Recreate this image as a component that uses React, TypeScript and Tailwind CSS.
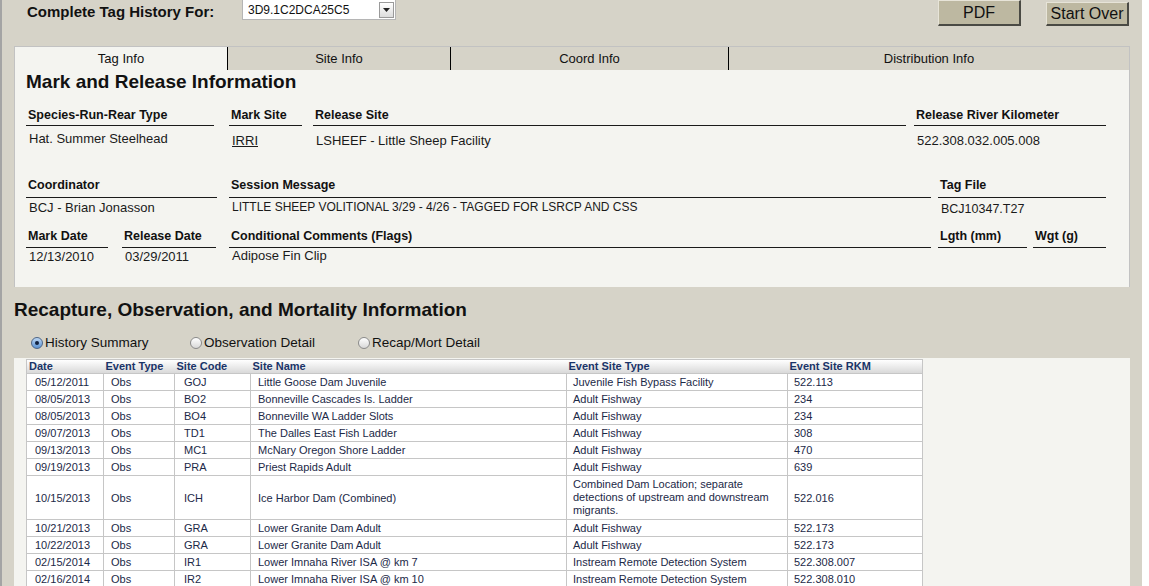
import React from 'react';

const font = "font-['Liberation_Sans',Arial,sans-serif]";

type FieldProps = {
  w: string;
  label: string;
  children?: React.ReactNode;
  labelClass?: string;
  valueClass?: string;
};

const Field: React.FC<FieldProps> = ({ w, label, children, labelClass = '', valueClass = '' }) => (
  <div className={`${w} shrink-0`}>
    <div className={`border-b border-[#1a1a1a] pl-[2px] text-[12.5px] font-bold leading-[16px] text-[#111] ${labelClass}`}>
      {label}
    </div>
    <div className={`pl-[3px] leading-[16px] text-[#1a1a1a] ${valueClass}`}>{children}</div>
  </div>
);

const Radio: React.FC<{ checked?: boolean; label: string; w: string }> = ({ checked, label, w }) => (
  <div className={`${w} flex items-center gap-[2px]`}>
    <span
      className={`flex h-[12px] w-[12px] items-center justify-center rounded-full border ${
        checked
          ? 'border-[#4d6587] bg-linear-to-b from-[#bcd6f2] to-[#5c93d3]'
          : 'border-[#8a8a8a] bg-linear-to-b from-white to-[#d8d8d8]'
      }`}
    >
      {checked && <span className="h-[4px] w-[4px] rounded-full bg-[#10213f]" />}
    </span>
    <span className="text-[13.5px] leading-[18px] text-[#111]">{label}</span>
  </div>
);

const rows: string[][] = [
  ['05/12/2011', 'Obs', 'GOJ', 'Little Goose Dam Juvenile', 'Juvenile Fish Bypass Facility', '522.113'],
  ['08/05/2013', 'Obs', 'BO2', 'Bonneville Cascades Is. Ladder', 'Adult Fishway', '234'],
  ['08/05/2013', 'Obs', 'BO4', 'Bonneville WA Ladder Slots', 'Adult Fishway', '234'],
  ['09/07/2013', 'Obs', 'TD1', 'The Dalles East Fish Ladder', 'Adult Fishway', '308'],
  ['09/13/2013', 'Obs', 'MC1', 'McNary Oregon Shore Ladder', 'Adult Fishway', '470'],
  ['09/19/2013', 'Obs', 'PRA', 'Priest Rapids Adult', 'Adult Fishway', '639'],
  [
    '10/15/2013',
    'Obs',
    'ICH',
    'Ice Harbor Dam (Combined)',
    'Combined Dam Location; separate detections of upstream and downstream migrants.',
    '522.016',
  ],
  ['10/21/2013', 'Obs', 'GRA', 'Lower Granite Dam Adult', 'Adult Fishway', '522.173'],
  ['10/22/2013', 'Obs', 'GRA', 'Lower Granite Dam Adult', 'Adult Fishway', '522.173'],
  ['02/15/2014', 'Obs', 'IR1', 'Lower Imnaha River ISA @ km 7', 'Instream Remote Detection System', '522.308.007'],
  ['02/16/2014', 'Obs', 'IR2', 'Lower Imnaha River ISA @ km 10', 'Instream Remote Detection System', '522.308.010'],
];

const headers = ['Date', 'Event Type', 'Site Code', 'Site Name', 'Event Site Type', 'Event Site RKM'];
const cellPad = ['pl-[8px]', 'pl-[7px]', 'pl-[9px]', 'pl-[7px]', 'pl-[6px]', 'pl-[6px]'];

export default function App() {
  return (
    <div className={`flex h-[586px] w-[1149px] overflow-hidden bg-white ${font}`}>
      <div className="h-full w-[1142px] shrink-0 border-l-2 border-[#a4a4a4] bg-[#d6d3c8]">
        {/* Header */}
        <div className="flex h-[46px] items-start">
          <div className="ml-[25px] mt-[2px] w-[215px] text-[15px] font-bold leading-[20px] text-[#111]">
            Complete Tag History For:
          </div>
          <div className="flex h-[20px] w-[154px] items-center border border-t-0 border-[#b5b5b5] bg-white">
            <span className="flex-1 pl-[5px] text-[12px] leading-[18px] text-[#111]">3D9.1C2DCA25C5</span>
            <span className="mr-[1px] flex h-[16px] w-[15px] items-center justify-center border border-[#9a9a9a] bg-linear-to-b from-white to-[#dcdcdc]">
              <svg width="7" height="4" viewBox="0 0 7 4">
                <path d="M0 0h7L3.5 4z" fill="#222" />
              </svg>
            </span>
          </div>
          <button className="ml-auto flex h-[26px] w-[83px] items-center justify-center border border-b-2 border-r-2 border-[#e7e4d8] border-b-[#4a4a44] border-r-[#4a4a44] bg-[#bdb8a1] text-[16px] text-[#111]">
            PDF
          </button>
          <button className="ml-[25px] mr-[13px] mt-[2px] flex h-[24px] w-[83px] items-center justify-center border border-b-2 border-r-2 border-[#e7e4d8] border-b-[#4a4a44] border-r-[#4a4a44] bg-[#bdb8a1] text-[16px] text-[#111]">
            Start Over
          </button>
        </div>

        {/* Tabs + Mark and Release */}
        <div className="ml-[12px] w-[1116px] border-x border-t border-[#c2c2c2]">
          <div className="flex h-[23px] text-[13px] leading-[23px] text-[#111]">
            <div className="w-[212px] bg-[#f4f4f0] text-center">Tag Info</div>
            <div className="w-[223px] border-l border-black text-center">Site Info</div>
            <div className="w-[278px] border-l border-black text-center">Coord Info</div>
            <div className="w-[401px] border-l border-black text-center">Distribution Info</div>
          </div>
          <div className="h-[217px] bg-[#f4f4f0] pl-[11px]">
            <div className="text-[19px] font-bold leading-[24px] text-[#111]">Mark and Release Information</div>

            <div className="mt-[13px] flex">
              <Field w="w-[188px]" label="Species-Run-Rear Type" labelClass="pb-[2px]" valueClass="mt-[5px] text-[13px]">
                Hat. Summer Steelhead
              </Field>
              <Field w="w-[73px] ml-[15px]" label="Mark Site" labelClass="pb-[2px]" valueClass="mt-[7px] text-[13px]">
                <span className="underline">IRRI</span>
              </Field>
              <Field w="w-[593px] ml-[11px]" label="Release Site" labelClass="pb-[2px]" valueClass="mt-[7px] text-[13px]">
                LSHEEF - Little Sheep Facility
              </Field>
              <Field w="w-[192px] ml-[8px]" label="Release River Kilometer" labelClass="pb-[2px]" valueClass="mt-[7px] text-[13px]">
                522.308.032.005.008
              </Field>
            </div>

            <div className="mt-[28px] flex">
              <Field w="w-[191px]" label="Coordinator" labelClass="pb-[4px]" valueClass="mt-[2px] text-[13px]">
                BCJ - Brian Jonasson
              </Field>
              <Field w="w-[702px] ml-[12px]" label="Session Message" labelClass="pb-[4px]" valueClass="mt-[1px] text-[12px]">
                LITTLE SHEEP VOLITIONAL 3/29 - 4/26 - TAGGED FOR LSRCP AND CSS
              </Field>
              <Field w="w-[168px] ml-[7px]" label="Tag File" labelClass="pb-[4px]" valueClass="mt-[3px] text-[12.5px]">
                BCJ10347.T27
              </Field>
            </div>

            <div className="mt-[11px] flex">
              <Field w="w-[82px]" label="Mark Date" labelClass="pb-[3px]" valueClass="mt-[1px] text-[13px]">
                12/13/2010
              </Field>
              <Field w="w-[94px] ml-[14px]" label="Release Date" labelClass="pb-[3px]" valueClass="mt-[1px] text-[13px]">
                03/29/2011
              </Field>
              <Field w="w-[702px] ml-[13px]" label="Conditional Comments (Flags)" labelClass="pb-[3px]" valueClass="text-[13px]">
                Adipose Fin Clip
              </Field>
              <Field w="w-[89px] ml-[7px]" label="Lgth (mm)" labelClass="pb-[3px]" />
              <Field w="w-[73px] ml-[6px]" label="Wgt (g)" labelClass="pb-[3px]" />
            </div>
          </div>
        </div>

        {/* Recapture section */}
        <div className="ml-[12px] mt-[11px] text-[19px] font-bold leading-[24px] text-[#111]">
          Recapture, Observation, and Mortality Information
        </div>
        <div className="ml-[29px] mt-[12px] flex">
          <Radio checked label="History Summary" w="w-[159px]" />
          <Radio label="Observation Detail" w="w-[168px]" />
          <Radio label="Recap/Mort Detail" w="w-[160px]" />
        </div>

        <div className="ml-[12px] mt-[6px] h-[240px] w-[1116px] bg-[#f4f4f0] pl-[12px] pt-[1px]">
          <table className="w-[896px] table-fixed border-collapse border border-[#c6c6c6] bg-white text-[11px]">
            <colgroup>
              <col className="w-[77px]" />
              <col className="w-[71px]" />
              <col className="w-[76px]" />
              <col className="w-[316px]" />
              <col className="w-[221px]" />
              <col className="w-[135px]" />
            </colgroup>
            <thead>
              <tr className="h-[14px] bg-linear-to-b from-white to-[#d6d6d6]">
                {headers.map((h) => (
                  <th key={h} className="border-b border-[#c6c6c6] pl-[2px] text-left font-bold leading-[13px] text-[#1a3468]">
                    {h}
                  </th>
                ))}
              </tr>
            </thead>
            <tbody>
              {rows.map((r, i) => (
                <tr key={i}>
                  {r.map((c, j) => (
                    <td
                      key={j}
                      className={`border border-[#c6c6c6] ${cellPad[j]} pr-[6px] align-middle text-[#1c2947] ${
                        j === 4 && c.length > 40 ? 'py-[2px] leading-[13px]' : 'h-[17px] leading-[16px]'
                      }`}
                    >
                      {c}
                    </td>
                  ))}
                </tr>
              ))}
            </tbody>
          </table>
        </div>
      </div>
    </div>
  );
}
